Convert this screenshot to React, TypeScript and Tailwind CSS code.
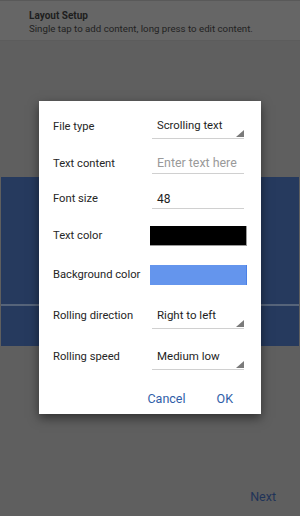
import React from "react";

const font = { fontFamily: "Roboto, 'Noto Sans', Arial, sans-serif" };

function Tri() {
  return (
    <svg className="absolute right-0 bottom-[1px]" width="8" height="7" viewBox="0 0 8 7">
      <polygon points="8,0 8,7 0,7" fill="#7a7a7a" />
    </svg>
  );
}

function Row({ label, children, h, mt }: { label: string; children: React.ReactNode; h: string; mt: string }) {
  return (
    <div className={`flex items-center ${h} ${mt}`}>
      <div className="w-[113px] pl-[14px] text-[11.2px] text-[#262626] whitespace-nowrap">{label}</div>
      {children}
    </div>
  );
}

export default function App() {
  return (
    <div className="relative w-[300px] h-[516px] bg-[#5f5f5f] overflow-hidden flex flex-col" style={font}>
      <div className="h-[41px] bg-[#666666] border-t border-[#595959] border-b border-b-[#5c5c5c] pl-[29px] pt-[9px]">
        <div className="text-[10px] font-bold text-[#1e1e1e] leading-[12px]">Layout Setup</div>
        <div className="text-[9.7px] text-[#222] leading-[14px]">Single tap to add content, long press to edit content.</div>
      </div>
      <div className="mt-[136px] mx-[1px] h-[169px] bg-[#263a5e] flex flex-col">
        <div className="h-[127px]" />
        <div className="h-[2px] bg-[#56647a]" />
      </div>
      <div className="flex-1" />
      <div className="flex justify-end pr-[24px] pb-[9px]">
        <span className="text-[12.5px] text-[#1f3358]">Next</span>
      </div>

      <div className="absolute left-[39px] top-[101px] w-[222px] h-[313px] bg-white shadow-[0_4px_10px_rgba(0,0,0,0.5)] flex flex-col">
        <Row label="File type" h="h-[24px]" mt="mt-[14px]">
          <div className="relative w-[92px] h-[24px] border-b border-[#d0d0d0] flex items-center pl-[5px] text-[11.3px] text-[#1e1e1e]">
            Scrolling text
            <Tri />
          </div>
        </Row>
        <Row label="Text content" h="h-[20px]" mt="mt-[15px]">
          <div className="w-[92px] h-[20px] border-b border-[#d0d0d0] flex items-center pl-[5px] text-[12.4px] text-[#9a9a9a] whitespace-nowrap overflow-hidden">
            Enter text here
          </div>
        </Row>
        <Row label="Font size" h="h-[20px]" mt="mt-[15px]">
          <div className="w-[92px] h-[20px] border-b border-[#d0d0d0] flex items-center pl-[5px] text-[12px] text-[#1e1e1e]">
            48
          </div>
        </Row>
        <Row label="Text color" h="h-[20px]" mt="mt-[17px]">
          <div className="ml-[-2px] w-[97px] h-[20px] bg-black border-b border-r border-[#9a9a9a]" />
        </Row>
        <Row label="Background color" h="h-[20px]" mt="mt-[19px]">
          <div className="ml-[-2px] w-[97px] h-[20px] bg-[#6495ed] border-r border-[#4a80e6]" />
        </Row>
        <Row label="Rolling direction" h="h-[26px]" mt="mt-[18px]">
          <div className="relative w-[92px] h-[26px] border-b border-[#d0d0d0] flex items-center pl-[5px] text-[11.5px] text-[#1e1e1e]">
            Right to left
            <Tri />
          </div>
        </Row>
        <Row label="Rolling speed" h="h-[26px]" mt="mt-[15px]">
          <div className="relative w-[92px] h-[26px] border-b border-[#d0d0d0] flex items-center pl-[5px] text-[11.5px] text-[#1e1e1e]">
            Medium low
            <Tri />
          </div>
        </Row>
        <div className="flex justify-end items-center mt-[20px] pr-[28px] gap-[31px] text-[12.5px] text-[#2f5ea8]">
          <span>Cancel</span>
          <span>OK</span>
        </div>
      </div>
    </div>
  );
}
